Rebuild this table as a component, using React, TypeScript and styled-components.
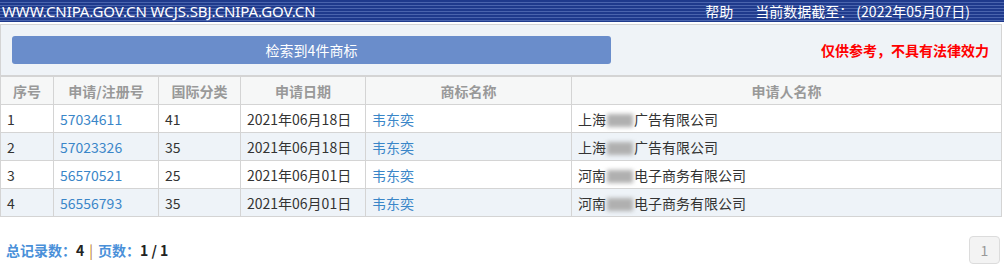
import React from 'react';
import styled, { createGlobalStyle } from 'styled-components';

const GlobalStyle = createGlobalStyle`
  html, body {
    margin: 0;
    padding: 0;
    background: #fff;
    font-family: "Noto Sans CJK SC", "Liberation Sans", sans-serif;
    font-size: 14px;
    color: #333;
  }
`;

type Row = {
  no: number,
  regNo: string,
  cls: string,
  date: string,
  mark: string,
  head: string,
  tail: string
};

const rows: Row[] = [
  { no: 1, regNo: '57034611', cls: '41', date: '2021年06月18日', mark: '韦东奕', head: '上海', tail: '广告有限公司' },
  { no: 2, regNo: '57023326', cls: '35', date: '2021年06月18日', mark: '韦东奕', head: '上海', tail: '广告有限公司' },
  { no: 3, regNo: '56570521', cls: '25', date: '2021年06月01日', mark: '韦东奕', head: '河南', tail: '电子商务有限公司' },
  { no: 4, regNo: '56556793', cls: '35', date: '2021年06月01日', mark: '韦东奕', head: '河南', tail: '电子商务有限公司' }
];

const Page = styled.div`
  width: 1004px;
`;

const TopBar = styled.div`
  height: 22px;
  display: flex;
  align-items: center;
  justify-content: space-between;
  padding: 0 34px 0 2px;
  background: repeating-linear-gradient(to bottom, #1f3a8c 0, #1f3a8c 2px, #4a64ad 2px, #4a64ad 3px);
  color: #fff;
  font-size: 14px;
  border-bottom: 2px solid #fff;
`;

const Site = styled.span`
  font-family: "Noto Sans", "Liberation Sans", sans-serif;
  font-size: 15px;
  letter-spacing: -0.1px;
`;

const TopLinks = styled.div`
  display: flex;
  gap: 22px;
`;

const Panel = styled.div`
  width: 1002px;
  box-sizing: border-box;
  border: 1px solid #d4d4d4;
  border-bottom: none;
  background: #eff3f7;
`;

const Toolbar = styled.div`
  height: 50px;
  display: flex;
  align-items: center;
  justify-content: space-between;
  padding: 0 12px 0 11px;
  border-bottom: 1px solid #d4d4d4;
`;

const SearchButton = styled.div`
  width: 599px;
  height: 28px;
  border-radius: 3px;
  background: #6a8dcb;
  color: #fff;
  display: flex;
  align-items: center;
  justify-content: center;
  font-size: 14px;
`;

const Warning = styled.span`
  color: #f00;
  font-weight: bold;
  font-size: 14px;
`;

const Table = styled.table`
  width: 1002px;
  border-collapse: collapse;
  table-layout: fixed;
  margin-left: -1px;
  font-size: 14px;
`;

const Th = styled.th<{ $w?: number }>`
  width: ${p => (p.$w ? `${p.$w}px` : 'auto')};
  height: 27px;
  background: #f6f7f7;
  color: #999;
  font-weight: bold;
  text-align: center;
  border: 1px solid #d4d4d4;
  padding: 0;
`;

const Tr = styled.tr<{ $alt: boolean }>`
  td {
    background: ${p => (p.$alt ? '#eef3f8' : '#fff')};
  }
`;

const Td = styled.td`
  height: 27px;
  padding: 0 6px;
  border: 1px solid #d4d4d4;
  color: #333;
  white-space: nowrap;
  line-height: 18px;
`;

const Link = styled.span`
  color: #3a86c8;
`;

const Blur = styled.span`
  display: inline-block;
  width: 26px;
  height: 13px;
  vertical-align: middle;
  background: #b0b0b0;
  filter: blur(2px);
  margin: 0 1px;
`;

const Footer = styled.div`
  display: flex;
  align-items: center;
  justify-content: space-between;
  padding: 19px 4px 0 6px;
`;

const Stats = styled.div`
  font-weight: bold;
  font-size: 14px;
`;

const Label = styled.span`
  color: #4a90d9;
`;

const Num = styled.span`
  color: #222;
`;

const Sep = styled.span`
  color: #b8742a;
  font-weight: normal;
  margin: 0 5px;
`;

const PageBtn = styled.div`
  width: 31px;
  height: 28px;
  box-sizing: border-box;
  border: 1px solid #dcdcdc;
  border-radius: 4px;
  background: #f3f3f3;
  color: #999;
  font-size: 14px;
  display: flex;
  align-items: center;
  justify-content: center;
`;

export default function App() {
  return (
    <Page>
      <GlobalStyle />
      <TopBar>
        <Site>WWW.CNIPA.GOV.CN WCJS.SBJ.CNIPA.GOV.CN</Site>
        <TopLinks>
          <span>帮助</span>
          <span>当前数据截至： (2022年05月07日)</span>
        </TopLinks>
      </TopBar>
      <Panel>
        <Toolbar>
          <SearchButton>检索到4件商标</SearchButton>
          <Warning>仅供参考，不具有法律效力</Warning>
        </Toolbar>
        <Table>
          <thead>
            <tr>
              <Th $w={52}>序号</Th>
              <Th $w={104}>申请/注册号</Th>
              <Th $w={81}>国际分类</Th>
              <Th $w={124}>申请日期</Th>
              <Th $w={205}>商标名称</Th>
              <Th>申请人名称</Th>
            </tr>
          </thead>
          <tbody>
            {rows.map((r, i) => (
              <Tr key={r.regNo} $alt={i % 2 === 1}>
                <Td>{r.no}</Td>
                <Td><Link>{r.regNo}</Link></Td>
                <Td>{r.cls}</Td>
                <Td>{r.date}</Td>
                <Td><Link>{r.mark}</Link></Td>
                <Td>{r.head}<Blur />{r.tail}</Td>
              </Tr>
            ))}
          </tbody>
        </Table>
      </Panel>
      <Footer>
        <Stats>
          <Label>总记录数：</Label><Num>4</Num><Sep>|</Sep><Label>页数：</Label><Num>1 / 1</Num>
        </Stats>
        <PageBtn>1</PageBtn>
      </Footer>
    </Page>
  );
}
